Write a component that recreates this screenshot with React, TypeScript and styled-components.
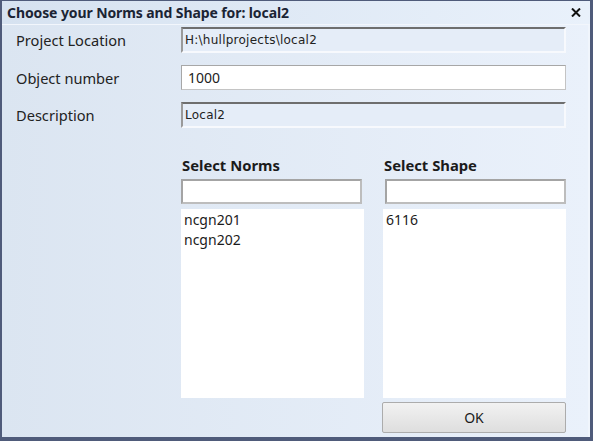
import React from 'react';
import styled, { createGlobalStyle } from 'styled-components';

// Page reset so the dialog fills the 593x441 window
const GlobalStyle = createGlobalStyle`
  html, body {
    margin: 0;
    padding: 0;
    width: 593px;
    height: 441px;
    overflow: hidden;
    background: #4e5a78;
  }
  * { box-sizing: border-box; }
`;

const Window = styled.div`
  width: 593px;
  height: 441px;
  display: flex;
  flex-direction: column;
  border-style: solid;
  border-color: #4f5b7a;
  border-width: 1px 3px 4px 2px;
  background: linear-gradient(to right, #dbe5f1, #eaf1fb);
  font-family: 'Noto Sans', 'Liberation Sans', sans-serif;
  color: #1e1e1e;
`;

const TitleBar = styled.div`
  height: 24px;
  flex: none;
  display: flex;
  align-items: center;
  justify-content: space-between;
  padding: 0 8px 0 5px;
  background: linear-gradient(to right, #d6e2f0, #e9f1fb);
  border-bottom: 1px solid #f2f6fc;
`;

const Title = styled.span`
  font-weight: bold;
  font-size: 14px;
  letter-spacing: -0.1px;
  color: #1b2434;
`;

const CloseButton = styled.button`
  border: none;
  background: none;
  padding: 0;
  width: 12px;
  height: 12px;
  display: flex;
  align-items: center;
  justify-content: center;
  cursor: pointer;
`;

const Body = styled.div`
  flex: 1;
  display: flex;
  flex-direction: column;
  padding: 2px 22px 0 14px;
  border-right: 2px solid #f0f5fc;
`;

const Form = styled.div`
  display: grid;
  grid-template-columns: 165px 385px;
  row-gap: 12px;
  align-items: center;
`;

const Label = styled.span`
  font-size: 14.6px;
  color: #222;
`;

const ReadOnlyField = styled.div`
  height: 26px;
  display: flex;
  align-items: center;
  padding: 0 2px;
  font-family: 'DejaVu Sans', sans-serif;
  font-size: 12px;
  letter-spacing: 0.25px;
  color: #222;
  background: #e5edf8;
  border-style: solid;
  border-width: 2px;
  border-color: #6e6e6e #f7f9fd #f7f9fd #9a9a9a;
`;

const TextField = styled.input`
  height: 25px;
  width: 100%;
  padding: 0 6px;
  font-family: 'Noto Sans', sans-serif;
  font-size: 14px;
  color: #222;
  background: #fff;
  border: 1px solid #a7a7a7;
  border-right-color: #c4c4c4;
  border-bottom-color: #c4c4c4;
  outline: none;
`;

const Pickers = styled.div`
  display: grid;
  grid-template-columns: 183px 183px;
  column-gap: 19px;
  margin: 28px 0 0 165px;
`;

const Column = styled.div`
  display: flex;
  flex-direction: column;
`;

const Heading = styled.div`
  font-weight: bold;
  font-size: 14.8px;
  padding-left: 1px;
  height: 23px;
  line-height: 19px;
  color: #1b1b1b;
`;

const Search = styled.input<{ $shift?: number }>`
  height: 25px;
  width: 181px;
  margin-left: ${p => p.$shift ?? 0}px;
  background: #fff;
  border: 2px solid #a4a4a4;
  border-right-color: #bdbdbd;
  border-bottom-color: #bdbdbd;
  outline: none;
`;

const List = styled.ul`
  list-style: none;
  margin: 5px 0 0 0;
  padding: 1px 3px;
  height: 189px;
  background: #fff;
  font-size: 14px;
  line-height: 20px;
  color: #1b1b1b;
`;

const Footer = styled.div`
  display: flex;
  justify-content: flex-end;
  margin-top: 4px;
`;

const OkButton = styled.button`
  width: 184px;
  height: 31px;
  font-family: 'Noto Sans', sans-serif;
  font-size: 14px;
  color: #1b1b1b;
  background: linear-gradient(#f2f2f2, #dedede);
  border: 1px solid #acacac;
  border-radius: 2px;
`;

const norms = ['ncgn201', 'ncgn202'];
const shapes = ['6116'];

export default function App() {
  return (
    <>
      <GlobalStyle />
      <Window>
        <TitleBar>
          <Title>Choose your Norms and Shape for: local2</Title>
          <CloseButton aria-label="Close">
            <svg width="10" height="9" viewBox="0 0 10 9">
              <path d="M1 0.5 L9 8.5 M9 0.5 L1 8.5" stroke="#111" strokeWidth="2" />
            </svg>
          </CloseButton>
        </TitleBar>
        <Body>
          <Form>
            <Label>Project Location</Label>
            <ReadOnlyField>H:\hullprojects\local2</ReadOnlyField>
            <Label>Object number</Label>
            <TextField defaultValue="1000" />
            <Label>Description</Label>
            <ReadOnlyField>Local2</ReadOnlyField>
          </Form>
          <Pickers>
            <Column>
              <Heading>Select Norms</Heading>
              <Search />
              <List>
                {norms.map(n => <li key={n}>{n}</li>)}
              </List>
            </Column>
            <Column>
              <Heading>Select Shape</Heading>
              <Search $shift={2} />
              <List>
                {shapes.map(s => <li key={s}>{s}</li>)}
              </List>
            </Column>
          </Pickers>
          <Footer>
            <OkButton>OK</OkButton>
          </Footer>
        </Body>
      </Window>
    </>
  );
}
